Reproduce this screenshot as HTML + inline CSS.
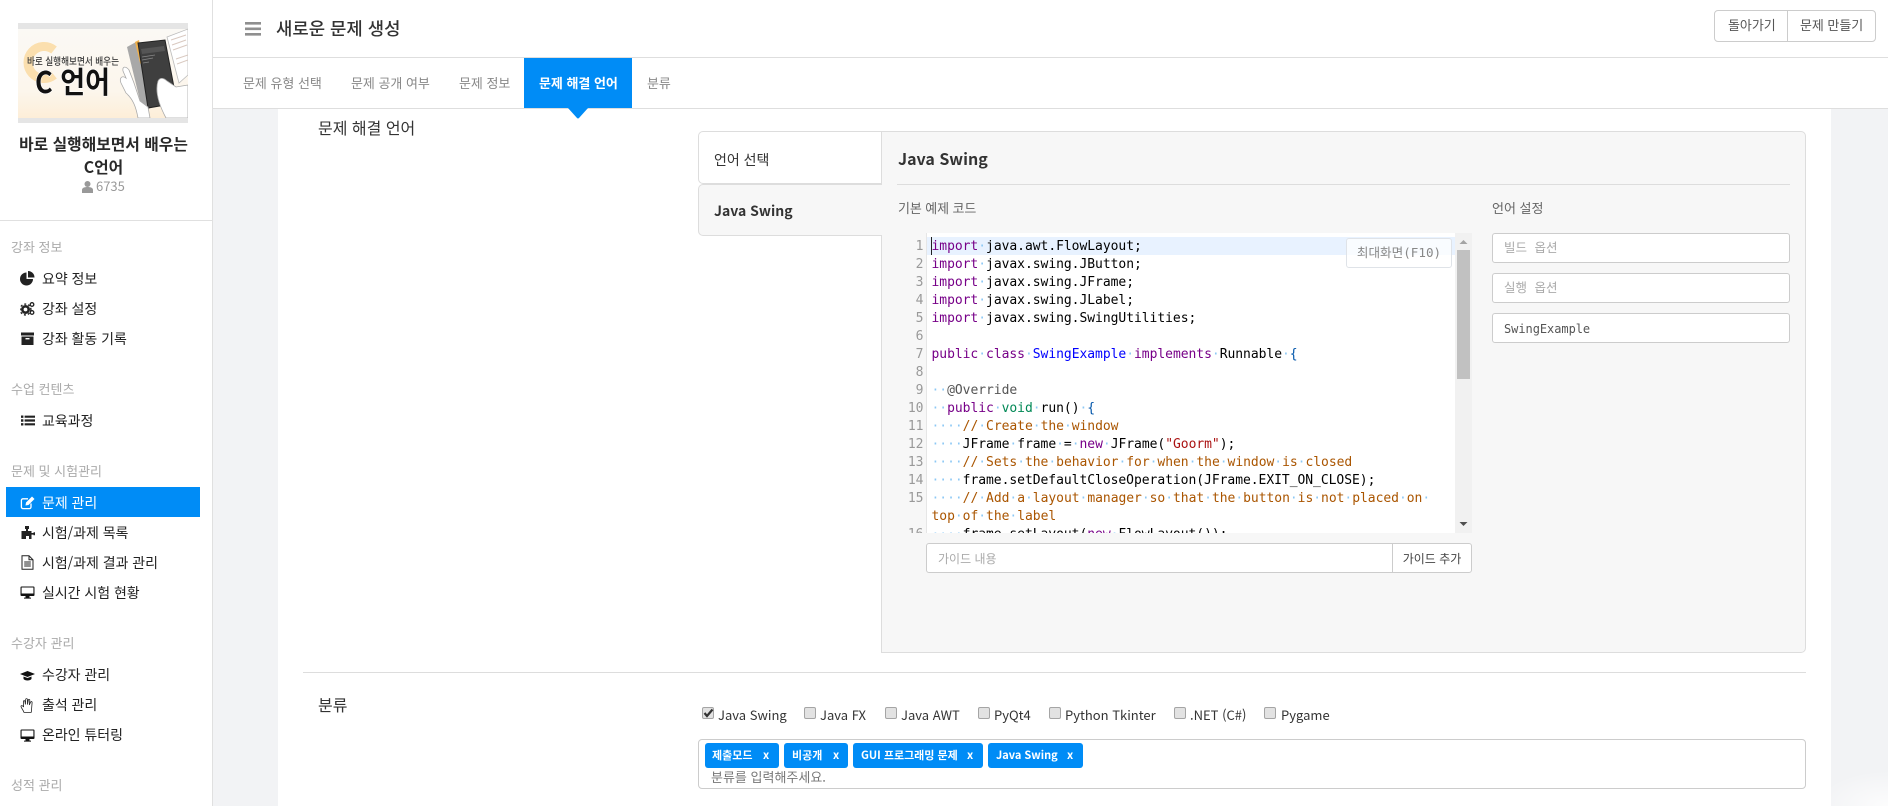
<!DOCTYPE html>
<html lang="ko"><head><meta charset="utf-8"><title>새로운 문제 생성</title>
<style>
*{box-sizing:border-box}
html,body{margin:0;padding:0;width:1888px;height:806px;overflow:hidden;background:#f2f3f5}
body{position:relative;font-family:"Noto Sans CJK KR","Liberation Sans",sans-serif;color:#333}
.a{position:absolute}
.t{position:absolute;white-space:nowrap;line-height:20px;height:20px}
.h{font-size:13px;color:#aaa;left:11px}
.m{font-size:14px;color:#222;left:42px;letter-spacing:-.04px}
.ic{position:absolute;left:20px;width:15px;height:15px}
.tab{font-size:13px;color:#888;top:73px;letter-spacing:-.03px}
.box{position:absolute;background:#fff;border:1px solid #ccc;border-radius:3px}
.mono{font-family:"DejaVu Sans Mono","Noto Sans CJK KR",monospace}
.code{position:absolute;left:931.5px;height:18px;line-height:18px;font-size:13px;letter-spacing:-.04px;white-space:pre;color:#000;font-family:"DejaVu Sans Mono","Liberation Mono",monospace}
.n{position:absolute;left:897px;width:26.5px;text-align:right;height:18px;line-height:18px;font-size:13px;color:#999;font-family:"DejaVu Sans Mono",monospace}
i{font-style:normal;color:#8cc8f5}
b.k{color:#708;font-weight:400}b.d{color:#00f;font-weight:400}b.c{color:#a50;font-weight:400}b.s{color:#a11;font-weight:400}b.y{color:#085;font-weight:400}b.g{color:#555;font-weight:400}b.v{color:#05a;font-weight:400}
.ck{position:absolute;top:707px;width:12px;height:12px;background:#e2e2e2;border:1px solid #a5a5a5;border-radius:2px}
.lb{position:absolute;top:705px;font-size:13px;color:#333;line-height:20px;white-space:nowrap}
.tag{position:absolute;top:743px;height:25px;background:#008cf6;border-radius:3px;color:#fff;font-size:11px;font-weight:700;line-height:24px;white-space:nowrap}
.tag span{position:absolute;top:0}
</style></head><body>

<!-- sidebar -->
<div class="a" style="left:0;top:0;width:213px;height:806px;background:#fff;border-right:1px solid #e0e0e0"></div>
<svg class="a" style="left:18px;top:23px" width="170" height="100" viewBox="0 0 170 100">
<defs><linearGradient id="g" x1="0" y1="0" x2="0" y2="1"><stop offset="0" stop-color="#fbf9f5"/><stop offset=".7" stop-color="#fcf6ec"/><stop offset="1" stop-color="#fdeed8"/></linearGradient></defs>
<rect width="170" height="100" fill="#e5e5e5"/><rect y="6" width="170" height="89" fill="url(#g)"/>
<path d="M36 27A16 16 0 1 0 36 52" fill="none" stroke="#fbdfae" stroke-width="9"/>
<text x="9" y="42" font-size="10.4" fill="#3c3c3c" font-family="Noto Sans CJK KR" font-weight="500" textLength="92" lengthAdjust="spacingAndGlyphs">바로 실행해보면서 배우는</text>
<text x="17" y="70" font-size="30" font-weight="700" fill="#111" stroke="#fff" stroke-width="1.2" paint-order="stroke" font-family="Noto Sans CJK KR" textLength="75" lengthAdjust="spacingAndGlyphs">C 언어</text>
<path d="M149 14L170 6V52L161 60Z" fill="#fff" stroke="#bbb" stroke-width=".8"/>
<path d="M153 17l15-5M154 22l14-5M155 27l14-5M158 36l12-4M159 41l11-4" stroke="#d9c9c0" stroke-width="1"/>
<path d="M109 24L118 19L136 82L125 90Z" fill="#a8a8a8"/>
<path d="M117 19L121 17L126 45L122 40Z" fill="#f0b04a"/>
<path d="M120 20L147 17L159 80L130 85Z" fill="#3f3f3f" stroke="#222" stroke-width="1"/>
<path d="M123 26L146 23L147 28L124 31Z" fill="#555"/>
<path d="M124 34L137 32M124 37L135 35M125 40L131 39" stroke="#888" stroke-width=".8"/>
<path d="M120 95C118 84 115 76 108 70L103 60C101 55 104 52 108 55L105 48C104 43 108 43 111 47L116 60L122 78L130 84L132 95Z" fill="#fff" stroke="#aaa" stroke-width=".8"/>
<path d="M148 95C140 80 137 68 140 58C142 54 146 55 149 58L158 64L170 62V95Z" fill="#fff" stroke="#aaa" stroke-width=".8"/>
<rect y="95" width="170" height="5" fill="#e5e5e5"/>
</svg>
<div class="t" style="left:0;width:207px;text-align:center;top:134px;font-size:15.8px;font-weight:700;color:#2a2a2a">바로 실행해보면서 배우는</div>
<div class="t" style="left:0;width:207px;text-align:center;top:157px;font-size:15.8px;font-weight:700;color:#2a2a2a">C언어</div>
<svg class="a" style="left:82px;top:181px" width="11" height="12" viewBox="0 0 11 12"><circle cx="5.5" cy="3" r="3" fill="#999"/><path d="M0 12V9C0 7 2 6 5.5 6S11 7 11 9V12Z" fill="#999"/></svg>
<div class="t" style="left:96px;top:176px;font-size:13px;color:#999">6735</div>
<div class="a" style="left:0;top:220px;width:212px;height:1px;background:#e0e0e0"></div>

<div class="t h" style="top:237px">강좌 정보</div>
<svg class="ic" style="top:271px" viewBox="0 0 15 15"><path d="M6.5 1.5A6.5 6.5 0 1 0 13 8H6.5Z" fill="#222"/><path d="M8 0A6.5 6.5 0 0 1 14.5 6.5H8Z" fill="#222"/></svg>
<div class="t m" style="top:269px">요약 정보</div>
<svg class="ic" style="top:301px" viewBox="0 0 15 15"><circle cx="5.5" cy="8.5" r="3.2" fill="none" stroke="#222" stroke-width="2.6"/><circle cx="5.5" cy="8.5" r="5.4" fill="none" stroke="#222" stroke-width="1.4" stroke-dasharray="2 2"/><circle cx="12" cy="3.5" r="1.8" fill="none" stroke="#222" stroke-width="1.3"/><circle cx="12" cy="11.5" r="1.8" fill="none" stroke="#222" stroke-width="1.3"/></svg>
<div class="t m" style="top:299px">강좌 설정</div>
<svg class="ic" style="top:331px" viewBox="0 0 15 15"><path d="M1 1.5H14V4.5H1ZM1.5 5.5H13.5V14H1.5Z" fill="#222"/><rect x="5.5" y="7" width="4" height="1.4" fill="#fff"/></svg>
<div class="t m" style="top:329px">강좌 활동 기록</div>

<div class="t h" style="top:379px">수업 컨텐츠</div>
<svg class="ic" style="top:413px" viewBox="0 0 15 15"><path d="M1 2.5h2.4v2.4H1zM1 6.3h2.4v2.4H1zM1 10.1h2.4v2.4H1zM4.6 2.6H15v2.2H4.6zM4.6 6.4H15v2.2H4.6zM4.6 10.2H15v2.2H4.6z" fill="#222"/></svg>
<div class="t m" style="top:411px">교육과정</div>

<div class="t h" style="top:461px">문제 및 시험관리</div>
<div class="a" style="left:6px;top:487px;width:194px;height:30px;background:#008cf6"></div>
<svg class="ic" style="top:495px" viewBox="0 0 15 15"><path d="M11 8.5V12a1.6 1.6 0 0 1-1.6 1.6H3A1.6 1.6 0 0 1 1.4 12V5.4A1.6 1.6 0 0 1 3 3.8H8" fill="none" stroke="#fff" stroke-width="1.3"/><path d="M5.5 10.5L6 7.5L12 1.5L14.5 4L8.5 10Z" fill="#fff"/></svg>
<div class="t m" style="top:493px;color:#fff">문제 관리</div>

<svg class="ic" style="top:525px" viewBox="0 0 15 15"><path d="M6 1h3v3H8V6h3.5v2H13.5v-.8H15v3h-1.5v-.6h-2V14H9v-3H6v3H1.5V6H6V4H5V1Z" fill="#222"/></svg>
<div class="t m" style="top:523px">시험/과제 목록</div>
<svg class="ic" style="top:555px" viewBox="0 0 15 15"><path d="M2 .8H9L13 4.8V14.2H2ZM9 .8V4.8H13M4.2 7H10.8M4.2 9H10.8M4.2 11H10.8" fill="none" stroke="#222" stroke-width="1"/></svg>
<div class="t m" style="top:553px">시험/과제 결과 관리</div>
<svg class="ic" style="top:585px" viewBox="0 0 15 15"><rect x="0.5" y="1.5" width="14" height="9.5" rx="1" fill="#111"/><rect x="1.6" y="2.5" width="11.8" height="6" fill="#fff"/><path d="M5.5 11h4v1.6h1.5v1H4v-1h1.5Z" fill="#111"/></svg>
<div class="t m" style="top:583px">실시간 시험 현황</div>

<div class="t h" style="top:633px">수강자 관리</div>
<svg class="ic" style="top:668px" viewBox="0 0 15 15"><path d="M0 6L7.5 3L15 6L7.5 9Z" fill="#111"/><path d="M3.5 8.5V11C5 13 10 13 11.5 11V8.5L7.5 10Z" fill="#111"/></svg>
<div class="t m" style="top:665px">수강자 관리</div>
<svg class="ic" style="top:698px" viewBox="0 0 15 15"><path d="M4 14.4C3 11.5 .8 9.5 1 8.2C1.4 7 3 8 3.6 9L3.4 3.5C3.4 2.4 4.9 2.4 5 3.5L5.4 6.5L5.7 1.4C5.8 .4 7.3 .4 7.4 1.4L7.5 6.5L8.3 2C8.5 1 10 1.3 9.8 2.4L9.3 7L10.7 4C11.2 3.2 12.4 3.6 12.1 4.7L11.7 9.5C11.5 11.3 11.7 12.5 11.2 14.4Z" fill="#fff" stroke="#222" stroke-width=".8"/></svg>
<div class="t m" style="top:695px">출석 관리</div>
<svg class="ic" style="top:728px" viewBox="0 0 15 15"><rect x="0.5" y="1.5" width="14" height="9.5" rx="1" fill="#111"/><rect x="1.6" y="2.5" width="11.8" height="6" fill="#fff"/><path d="M5.5 11h4v1.6h1.5v1H4v-1h1.5Z" fill="#111"/></svg>
<div class="t m" style="top:725px">온라인 튜터링</div>

<div class="t h" style="top:775px">성적 관리</div>

<!-- white content -->
<div class="a" style="left:278px;top:109px;width:1553px;height:697px;background:#fff"></div>
<div class="a" style="left:1815px;top:770px;width:73px;height:36px;background:radial-gradient(ellipse at 100% 100%,rgba(255,255,255,.8),rgba(255,255,255,0) 70%)"></div>

<!-- top bars -->
<div class="a" style="left:213px;top:0;width:1675px;height:109px;background:#fff"></div>
<div class="a" style="left:213px;top:57px;width:1675px;height:1px;background:#dedede"></div>
<div class="a" style="left:213px;top:108px;width:1675px;height:1px;background:#dedede"></div>
<svg class="a" style="left:245px;top:22px" width="16" height="14" viewBox="0 0 16 14"><path d="M0 0h16v2.6H0zM0 5.5h16v2.6H0zM0 11h16v2.6H0z" fill="#8f8f8f"/></svg>
<div class="t" style="left:276px;top:18px;font-size:17.8px;color:#333;font-weight:500">새로운 문제 생성</div>
<div class="box" style="left:1714px;top:10px;width:162px;height:32px;border-radius:4px"></div>
<div class="a" style="left:1787px;top:11px;width:1px;height:30px;background:#ccc"></div>
<div class="t" style="left:1728px;top:15px;font-size:13px;color:#555;letter-spacing:-.05px">돌아가기</div>
<div class="t" style="left:1800px;top:15px;font-size:13px;color:#555;letter-spacing:-.05px">문제 만들기</div>

<div class="t tab" style="left:243px">문제 유형 선택</div>
<div class="t tab" style="left:351px">문제 공개 여부</div>
<div class="t tab" style="left:459px">문제 정보</div>
<div class="a" style="left:524px;top:58px;width:108px;height:50px;background:#008cf6"></div>
<svg class="a" style="left:567px;top:108px" width="22" height="11" viewBox="0 0 22 11"><path d="M1 0H21L12 10Q11 11 10 10Z" fill="#008cf6"/></svg>
<div class="t tab" style="left:539px;color:#fff;font-weight:700">문제 해결 언어</div>
<div class="t tab" style="left:647px">분류</div>

<div class="t" style="left:318px;top:117px;font-size:16px;color:#333">문제 해결 언어</div>

<!-- left tabs -->
<div class="a" style="left:698px;top:131px;width:185px;height:53px;background:#fff;border:1px solid #ddd;border-right:0;border-radius:5px 0 0 5px"></div>
<div class="a" style="left:698px;top:184px;width:185px;height:52px;background:#f7f7f7;border:1px solid #ddd;border-right:0;border-radius:5px 0 0 5px"></div>
<div class="t" style="left:714px;top:150px;font-size:14px;color:#333">언어 선택</div>
<div class="t" style="left:714px;top:201px;font-size:14px;font-weight:700;color:#333">Java Swing</div>
<!-- right panel -->
<div class="a" style="left:881px;top:131px;width:925px;height:522px;background:#f7f7f7;border:1px solid #ddd;border-radius:0 5px 5px 0"></div>
<div class="a" style="left:881px;top:185px;width:2px;height:50px;background:#f7f7f7"></div>
<div class="t" style="left:898px;top:148px;font-size:16px;font-weight:700;color:#333">Java Swing</div>
<div class="a" style="left:897px;top:184px;width:893px;height:1px;background:#ddd"></div>
<div class="t" style="left:898px;top:198px;font-size:13px;color:#666;letter-spacing:-.1px">기본 예제 코드</div>
<div class="t" style="left:1492px;top:198px;font-size:13px;color:#666">언어 설정</div>

<!-- editor -->
<div class="a" style="left:897px;top:233px;width:575px;height:300px;overflow:hidden;background:#fff">
<div class="a" style="left:0;top:0;height:300px;background:#f7f7f7;border-right:1px solid #e6e6e6;width:30px"></div>
<div class="a" style="left:30px;top:4px;width:528px;height:18px;background:#e8f2ff"></div>
<div class="a" style="left:34px;top:4px;width:1px;height:18px;background:#222"></div>
<div class="a" style="left:558px;top:0;width:17px;height:300px;background:#f1f1f1"></div>
<div class="a" style="left:560px;top:17px;width:13px;height:129px;background:#c1c1c1"></div>
<svg class="a" style="left:561px;top:6px" width="11" height="6" viewBox="0 0 11 6"><path d="M1.5 5L5.5 1L9.5 5Z" fill="#a3a3a3"/></svg>
<svg class="a" style="left:561px;top:288px" width="11" height="6" viewBox="0 0 11 6"><path d="M1.5 1L5.5 5L9.5 1Z" fill="#505050"/></svg>
</div>
<div class="n" style="top:238px">1</div><div class="n" style="top:256px">2</div><div class="n" style="top:274px">3</div><div class="n" style="top:292px">4</div><div class="n" style="top:310px">5</div><div class="n" style="top:328px">6</div><div class="n" style="top:346px">7</div><div class="n" style="top:364px">8</div><div class="n" style="top:382px">9</div><div class="n" style="top:400px">10</div><div class="n" style="top:418px">11</div><div class="n" style="top:436px">12</div><div class="n" style="top:454px">13</div><div class="n" style="top:472px">14</div><div class="n" style="top:490px">15</div>
<div class="code" style="top:238px"><b class="k">import</b><i>·</i>java.awt.FlowLayout;</div>
<div class="code" style="top:256px"><b class="k">import</b><i>·</i>javax.swing.JButton;</div>
<div class="code" style="top:274px"><b class="k">import</b><i>·</i>javax.swing.JFrame;</div>
<div class="code" style="top:292px"><b class="k">import</b><i>·</i>javax.swing.JLabel;</div>
<div class="code" style="top:310px"><b class="k">import</b><i>·</i>javax.swing.SwingUtilities;</div>
<div class="code" style="top:346px"><b class="k">public</b><i>·</i><b class="k">class</b><i>·</i><b class="d">SwingExample</b><i>·</i><b class="k">implements</b><i>·</i>Runnable<i>·</i><b class="v">{</b></div>
<div class="code" style="top:382px"><i>··</i><b class="g">@Override</b></div>
<div class="code" style="top:400px"><i>··</i><b class="k">public</b><i>·</i><b class="y">void</b><i>·</i>run()<i>·</i><b class="v">{</b></div>
<div class="code" style="top:418px"><i>····</i><b class="c">//</b><i>·</i><b class="c">Create</b><i>·</i><b class="c">the</b><i>·</i><b class="c">window</b></div>
<div class="code" style="top:436px"><i>····</i>JFrame<i>·</i>frame<i>·</i>=<i>·</i><b class="k">new</b><i>·</i>JFrame(<b class="s">"Goorm"</b>);</div>
<div class="code" style="top:454px"><i>····</i><b class="c">//</b><i>·</i><b class="c">Sets</b><i>·</i><b class="c">the</b><i>·</i><b class="c">behavior</b><i>·</i><b class="c">for</b><i>·</i><b class="c">when</b><i>·</i><b class="c">the</b><i>·</i><b class="c">window</b><i>·</i><b class="c">is</b><i>·</i><b class="c">closed</b></div>
<div class="code" style="top:472px"><i>····</i>frame.setDefaultCloseOperation(JFrame.EXIT_ON_CLOSE);</div>
<div class="code" style="top:490px"><i>····</i><b class="c">//</b><i>·</i><b class="c">Add</b><i>·</i><b class="c">a</b><i>·</i><b class="c">layout</b><i>·</i><b class="c">manager</b><i>·</i><b class="c">so</b><i>·</i><b class="c">that</b><i>·</i><b class="c">the</b><i>·</i><b class="c">button</b><i>·</i><b class="c">is</b><i>·</i><b class="c">not</b><i>·</i><b class="c">placed</b><i>·</i><b class="c">on</b><i>·</i></div>
<div class="code" style="top:508px"><b class="c">top</b><i>·</i><b class="c">of</b><i>·</i><b class="c">the</b><i>·</i><b class="c">label</b></div>
<div class="a" style="left:897px;top:526px;width:558px;height:7px;overflow:hidden"><div class="n" style="left:0;top:0">16</div><div class="code" style="left:34.5px;top:0"><i>····</i>frame.setLayout(<b class="k">new</b><i>·</i>FlowLayout());</div></div>

<div class="a mono" style="left:1346px;top:238px;width:106px;height:30px;background:rgba(255,255,255,.75);border:1px solid #dfe3e8;border-radius:3px;font-size:12.6px;color:#888;line-height:28px;text-align:center;white-space:nowrap">최대화면(F10)</div>

<!-- guide -->
<div class="box" style="left:926px;top:543px;width:467px;height:30px;border-radius:3px 0 0 3px"></div>
<div class="t" style="left:938px;top:549px;font-size:12px;color:#aaa">가이드 내용</div>
<div class="box" style="left:1392px;top:543px;width:80px;height:30px;border-radius:0 3px 3px 0"></div>
<div class="t" style="left:1392px;width:80px;text-align:center;top:549px;font-size:12px;color:#444">가이드 추가</div>

<!-- settings -->
<div class="box" style="left:1492px;top:233px;width:298px;height:30px"></div>
<div class="t mono" style="left:1504px;top:238px;font-size:12.5px;color:#aaa">빌드 옵션</div>
<div class="box" style="left:1492px;top:273px;width:298px;height:30px"></div>
<div class="t mono" style="left:1504px;top:278px;font-size:12.5px;color:#aaa">실행 옵션</div>
<div class="box" style="left:1492px;top:313px;width:298px;height:30px"></div>
<div class="t mono" style="left:1504px;top:319px;font-size:12px;color:#555;letter-spacing:-.05px">SwingExample</div>

<!-- category -->
<div class="a" style="left:303px;top:672px;width:1503px;height:1px;background:#ddd"></div>
<div class="t" style="left:318px;top:694px;font-size:16px;color:#333">분류</div>

<div class="ck" style="left:702px"></div>
<svg class="a" style="left:703px;top:708px" width="11" height="10" viewBox="0 0 11 10"><path d="M1.5 5L4 8L9.5 1.5" fill="none" stroke="#333" stroke-width="2.2"/></svg>
<div class="lb" style="left:718px">Java Swing</div>
<div class="ck" style="left:804px"></div><div class="lb" style="left:820px">Java FX</div>
<div class="ck" style="left:885px"></div><div class="lb" style="left:901px">Java AWT</div>
<div class="ck" style="left:978px"></div><div class="lb" style="left:994px">PyQt4</div>
<div class="ck" style="left:1049px"></div><div class="lb" style="left:1065px">Python Tkinter</div>
<div class="ck" style="left:1174px"></div><div class="lb" style="left:1190px">.NET (C#)</div>
<div class="ck" style="left:1264px"></div><div class="lb" style="left:1281px">Pygame</div>

<div class="box" style="left:698px;top:739px;width:1108px;height:50px;border-radius:4px"></div>
<div class="tag" style="left:705px;width:74px"><span style="left:7px">제출모드</span><span style="left:58px">x</span></div>
<div class="tag" style="left:784px;width:64px"><span style="left:8px">비공개</span><span style="left:49px">x</span></div>
<div class="tag" style="left:853px;width:130px"><span style="left:8px">GUI 프로그래밍 문제</span><span style="left:114px">x</span></div>
<div class="tag" style="left:988px;width:95px"><span style="left:8px">Java Swing</span><span style="left:79px">x</span></div>
<div class="t" style="left:711px;top:767px;font-size:13px;color:#777">분류를 입력해주세요.</div>
</body></html>
